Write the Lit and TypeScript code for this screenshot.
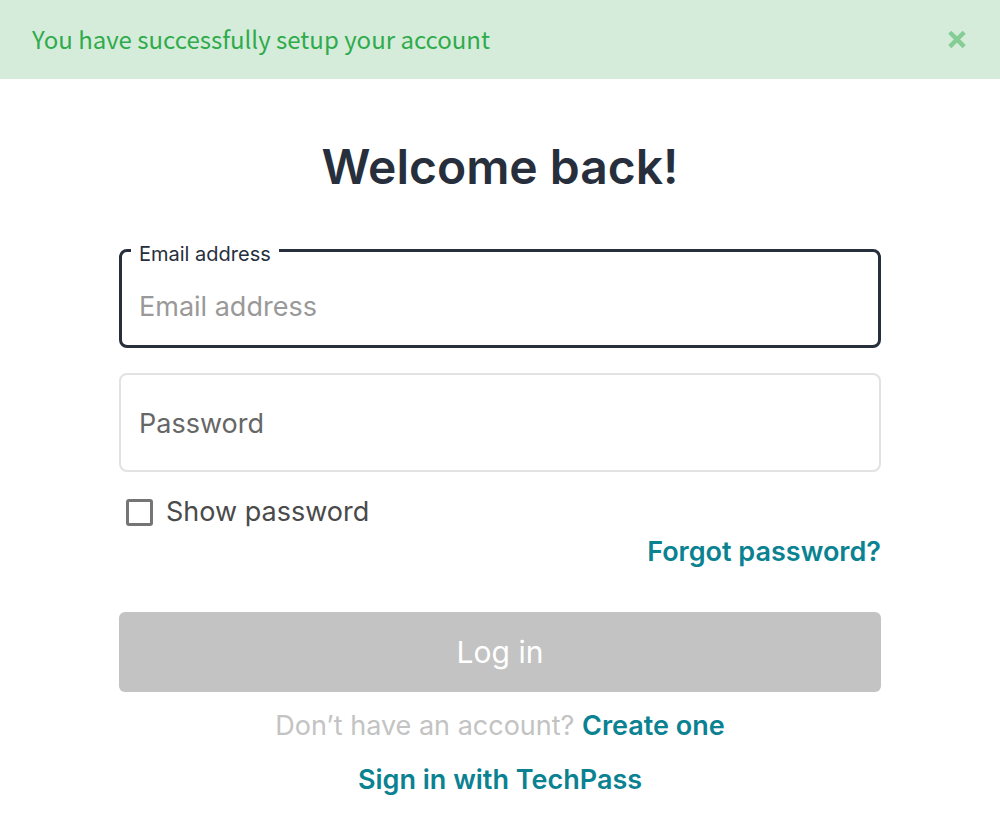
import { LitElement, html, css } from "lit";
import { customElement, state } from "lit/decorators.js";
import { classMap } from "lit/directives/class-map.js";

@customElement("app-root")
export class AppRoot extends LitElement {
  @state() private active = "email";
  @state() private email = "";
  @state() private password = "";
  @state() private showPassword = false;
  @state() private noticeOpen = true;

  static styles = css`
    :host {
      display: block;
      min-height: 100vh;
      background: #fff;
      color: #272f3d;
      font-family: Inter, "Liberation Sans", sans-serif;
      font-size: 27px;
      line-height: 30px;
    }
    * {
      box-sizing: border-box;
    }
    .notice {
      display: flex;
      align-items: center;
      justify-content: space-between;
      padding: 20px 32px 22px;
      background: #d5ecdb;
      color: #2fab4b;
      font-family: "Noto Sans CJK SC", sans-serif;
      font-size: 24px;
      line-height: 37px;
    }
    .notice p {
      margin: 0;
    }
    .close {
      display: flex;
      padding: 0;
      border: 0;
      background: none;
      color: #85cc95;
      cursor: pointer;
    }
    main {
      padding: 56px 119px 40px;
    }
    h1 {
      margin: 0 0 50px;
      font-size: 48px;
      line-height: 64px;
      font-weight: 600;
      text-align: center;
    }
    .field {
      position: relative;
      margin-bottom: 25px;
    }
    .field input {
      display: block;
      width: 100%;
      height: 99px;
      padding: 16px 18px 0;
      border: 2px solid #e2e2e2;
      border-radius: 8px;
      outline: 0;
      background: #fff;
      color: #272f3d;
      font: inherit;
    }
    .field input::placeholder {
      color: #999;
      opacity: 1;
    }
    .field label {
      position: absolute;
      top: 36px;
      left: 12px;
      padding: 0 8px;
      color: #666;
      pointer-events: none;
    }
    .active input {
      padding: 16px 17px 0;
      border: 3px solid #272f3d;
    }
    .raised label {
      top: -7px;
      background: #fff;
      color: #272f3d;
      font-size: 20px;
      line-height: 24px;
    }
    .show {
      display: flex;
      align-items: center;
      gap: 13px;
      width: fit-content;
      padding-left: 7px;
      color: #4a4a4a;
    }
    .show input {
      appearance: none;
      display: grid;
      place-content: center;
      width: 27px;
      height: 27px;
      margin: 0;
      border: 3px solid #757575;
      border-radius: 3px;
    }
    .show input:checked::before {
      content: "";
      width: 15px;
      height: 15px;
      background: #0a8292;
    }
    a {
      color: #0a8292;
      font-weight: 600;
      text-decoration: none;
    }
    .forgot {
      margin: 10px 0 45px;
      text-align: right;
    }
    .submit {
      display: block;
      width: 100%;
      padding: 20px;
      border: 0;
      border-radius: 6px;
      background: #c3c3c3;
      color: #fff;
      font: inherit;
      font-size: 30px;
      line-height: 40px;
    }
    .submit:enabled {
      background: #0a8292;
    }
    .links {
      display: grid;
      gap: 24px;
      margin-top: 19px;
      text-align: center;
      color: #c3c3c3;
    }
    .links p {
      margin: 0;
    }
  `;

  private submit(e: Event) {
    e.preventDefault();
  }

  render() {
    const emailActive = this.active === "email";
    const passwordActive = this.active === "password";
    return html`
      ${this.noticeOpen
        ? html`<div class="notice" role="status">
            <p>You have successfully setup your account</p>
            <button class="close" aria-label="Dismiss" @click=${() => (this.noticeOpen = false)}>
              <svg width="22" height="22" viewBox="0 0 22 22" fill="none" stroke="currentColor" stroke-width="4.4">
                <path d="M3.8 4.2 L18.2 18.6 M18.2 4.2 L3.8 18.6" />
              </svg>
            </button>
          </div>`
        : null}
      <main>
        <h1>Welcome back!</h1>
        <form @submit=${this.submit}>
          <div class=${classMap({ field: true, active: emailActive, raised: emailActive || !!this.email })}>
            <input
              id="email"
              type="email"
              placeholder=${emailActive ? "Email address" : ""}
              .value=${this.email}
              @focus=${() => (this.active = "email")}
              @input=${(e: Event) => (this.email = (e.target as HTMLInputElement).value)}
            />
            <label for="email">Email address</label>
          </div>
          <div class=${classMap({ field: true, active: passwordActive, raised: passwordActive || !!this.password })}>
            <input
              id="password"
              type=${this.showPassword ? "text" : "password"}
              .value=${this.password}
              @focus=${() => (this.active = "password")}
              @input=${(e: Event) => (this.password = (e.target as HTMLInputElement).value)}
            />
            <label for="password">Password</label>
          </div>
          <label class="show">
            <input
              type="checkbox"
              .checked=${this.showPassword}
              @change=${(e: Event) => (this.showPassword = (e.target as HTMLInputElement).checked)}
            />
            Show password
          </label>
          <div class="forgot"><a href="#forgot">Forgot password?</a></div>
          <button class="submit" type="submit" ?disabled=${!this.email || !this.password}>Log in</button>
        </form>
        <div class="links">
          <p>Don’t have an account? <a href="#create">Create one</a></p>
          <p><a href="#techpass">Sign in with TechPass</a></p>
        </div>
      </main>
    `;
  }
}
